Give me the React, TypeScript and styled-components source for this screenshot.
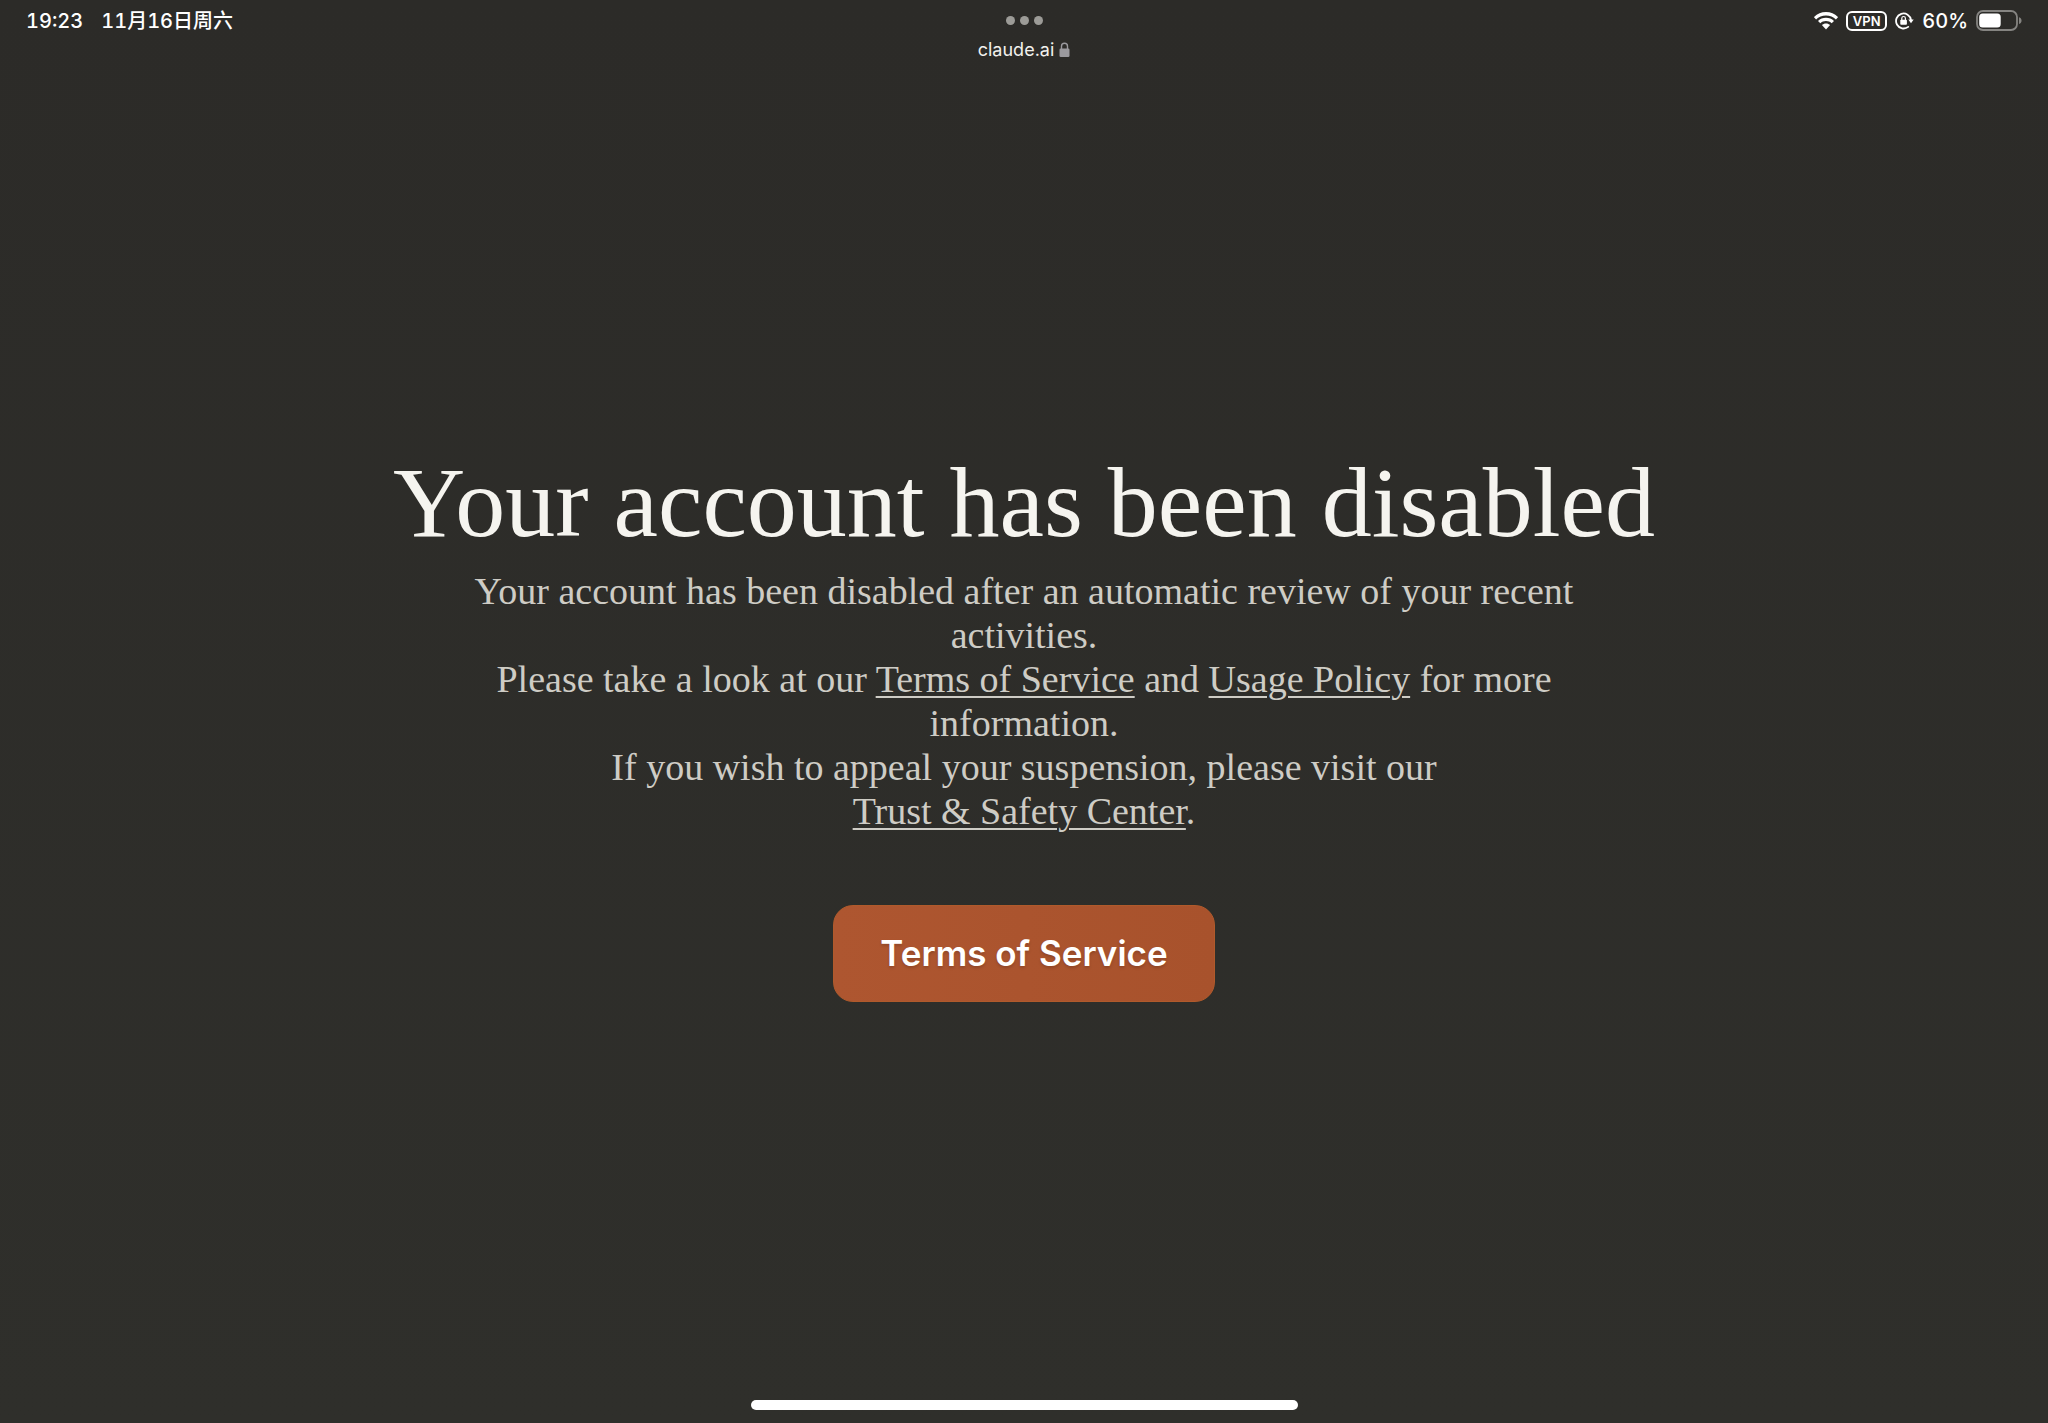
import React from "react";
import styled, { createGlobalStyle } from "styled-components";

const sans = '"Inter", "Noto Sans CJK SC", sans-serif';
const serif = '"Liberation Serif", "Noto Sans CJK SC", serif';

const GlobalStyle = createGlobalStyle`
  *, *::before, *::after { box-sizing: border-box; }
  body { margin: 0; background: #2d2c28; }
`;

const Screen = styled.div`
  display: flex;
  flex-direction: column;
  min-height: 100vh;
  background: linear-gradient(#2c2b28, #2f2f2b);
  color: #fff;
  font-family: ${sans};
`;

const StatusBar = styled.header`
  display: grid;
  grid-template-columns: 1fr auto 1fr;
  align-items: start;
  height: 64px;
  padding: 8px 26px 0;
`;

const StatusGroup = styled.div<{ $end?: boolean; $gap: number }>`
  display: flex;
  align-items: center;
  justify-content: ${(p) => (p.$end ? "flex-end" : "flex-start")};
  gap: ${(p) => p.$gap}px;
  height: 26px;
  font-size: 20px;
  line-height: 26px;
  font-weight: 500;
  font-variant-numeric: tabular-nums;
  white-space: nowrap;
`;

const TabInfo = styled.div`
  display: flex;
  flex-direction: column;
  align-items: center;
`;

const DotsButton = styled.button`
  display: flex;
  align-items: center;
  gap: 5px;
  height: 25px;
  padding: 0;
  border: 0;
  background: none;
`;

const Dot = styled.span`
  width: 9px;
  height: 9px;
  border-radius: 50%;
  background: #9c9b97;
`;

const Address = styled.div`
  display: flex;
  align-items: center;
  gap: 5px;
  color: #f2f1ed;
  font-size: 18px;
  line-height: 34px;
`;

const VpnBadge = styled.span`
  display: flex;
  align-items: center;
  justify-content: center;
  width: 41px;
  height: 20px;
  border: 2px solid #fff;
  border-radius: 6px;
  font-size: 13px;
  line-height: 16px;
  font-weight: 600;
`;

const Main = styled.main`
  flex: 1;
  display: flex;
  flex-direction: column;
  align-items: center;
  justify-content: center;
  padding: 0 24px 20px;
  text-align: center;
`;

const Title = styled.h1`
  margin: 0 0 6px;
  color: #f5f4ef;
  font-family: ${serif};
  font-size: 100px;
  line-height: 120px;
  font-weight: 400;
`;

const Message = styled.p`
  max-width: 1152px;
  margin: 0 0 72px;
  color: #ceccc5;
  font-family: ${serif};
  font-size: 38px;
  line-height: 44px;
`;

const TextLink = styled.a`
  color: inherit;
  white-space: nowrap;
  text-decoration: underline;
  text-decoration-thickness: 2px;
  text-underline-offset: 4px;
`;

const PrimaryButton = styled.button`
  padding: 0 46px;
  height: 97px;
  border: 1px solid #b05a2b;
  border-radius: 20px;
  background: linear-gradient(90deg, #ae5630, #a8522c);
  color: #fff;
  font-family: ${sans};
  font-size: 35px;
  line-height: 44px;
  font-weight: 600;
  text-shadow: 0 2px 3px rgba(0, 0, 0, 0.16);
`;

const HomeArea = styled.footer`
  display: flex;
  justify-content: center;
  padding-bottom: 13px;
`;

const HomeIndicator = styled.div`
  width: 547px;
  max-width: 60%;
  height: 10px;
  border-radius: 5px;
  background: #fff;
`;

const WifiIcon = () => (
  <svg width="24" height="18" viewBox="0 0 24 18" fill="#fff" aria-label="Wi-Fi">
    <path d="M12 0C7.400 0 3.200 1.800 .3 4.700L0 5.200 2.100 7.400C4.700 4.900 8.100 3.500 12 3.500S19.300 4.900 21.900 7.400L24 5.200 23.700 4.700C20.800 1.800 16.600 0 12 0Z" />
    <path d="M12 5.800C8.900 5.800 6.100 7 4 9L6.300 11.300C7.800 9.900 9.800 9.100 12 9.100S16.200 9.900 17.700 11.300L20 9C17.900 7 15.100 5.800 12 5.800Z" />
    <path d="M12 11.400C10.400 11.400 9 12 7.900 12.900L12 17.500 16.100 12.900C15 12 13.600 11.400 12 11.400Z" />
  </svg>
);

const RotationLockIcon = () => (
  <svg width="19" height="18" viewBox="0 0 19 18" fill="none" aria-label="Rotation lock">
    <path d="M13.200 14.900A7.500 7.500 0 1 1 16 8" stroke="#fff" strokeWidth="1.800" strokeLinecap="round" />
    <path d="M13.300 7.600H18.700L16 11.200Z" fill="#fff" />
    <rect x="5.300" y="7.800" width="6.600" height="5" rx=".8" fill="#fff" />
    <path d="M6.800 8V6.300a1.800 1.800 0 0 1 3.600 0V8" stroke="#fff" strokeWidth="1.200" />
  </svg>
);

const BatteryIcon = () => (
  <svg width="46" height="22" viewBox="0 0 46 22" aria-label="Battery">
    <rect x="1" y="1" width="40" height="19" rx="6" fill="none" stroke="#858481" strokeWidth="1.800" />
    <path d="M43 7.300c3.400 1 3.400 5.800 0 6.800Z" fill="#858481" />
    <rect x="3.200" y="3.500" width="21.500" height="14" rx="3.500" fill="#fff" />
  </svg>
);

const LockIcon = () => (
  <svg width="11" height="16" viewBox="0 0 11 16" fill="none" aria-label="Secure">
    <rect x=".5" y="6.500" width="10" height="8.500" rx="1.300" fill="#9b9a9e" />
    <path d="M2.500 7V4.300a3 3 0 0 1 6 0V7" stroke="#9b9a9e" strokeWidth="1.400" />
  </svg>
);

export default function App() {
  return (
    <Screen>
      <GlobalStyle />
      <StatusBar>
        <StatusGroup $gap={18}>
          <span>19:23</span>
          <span>11月16日周六</span>
        </StatusGroup>
        <TabInfo>
          <DotsButton type="button" aria-label="Window options">
            <Dot />
            <Dot />
            <Dot />
          </DotsButton>
          <Address>
            <span>claude.ai</span>
            <LockIcon />
          </Address>
        </TabInfo>
        <StatusGroup $end $gap={8}>
          <WifiIcon />
          <VpnBadge>VPN</VpnBadge>
          <RotationLockIcon />
          <span>60%</span>
          <BatteryIcon />
        </StatusGroup>
      </StatusBar>
      <Main>
        <Title>Your account has been disabled</Title>
        <Message>
          Your account has been disabled after an automatic review of your recent activities.
          <br />
          Please take a look at our <TextLink href="#terms">Terms of Service</TextLink> and{" "}
          <TextLink href="#usage">Usage Policy</TextLink> for more information.
          <br />
          If you wish to appeal your suspension, please visit our{" "}
          <TextLink href="#safety">Trust &amp; Safety Center</TextLink>.
        </Message>
        <PrimaryButton type="button">Terms of Service</PrimaryButton>
      </Main>
      <HomeArea>
        <HomeIndicator />
      </HomeArea>
    </Screen>
  );
}
